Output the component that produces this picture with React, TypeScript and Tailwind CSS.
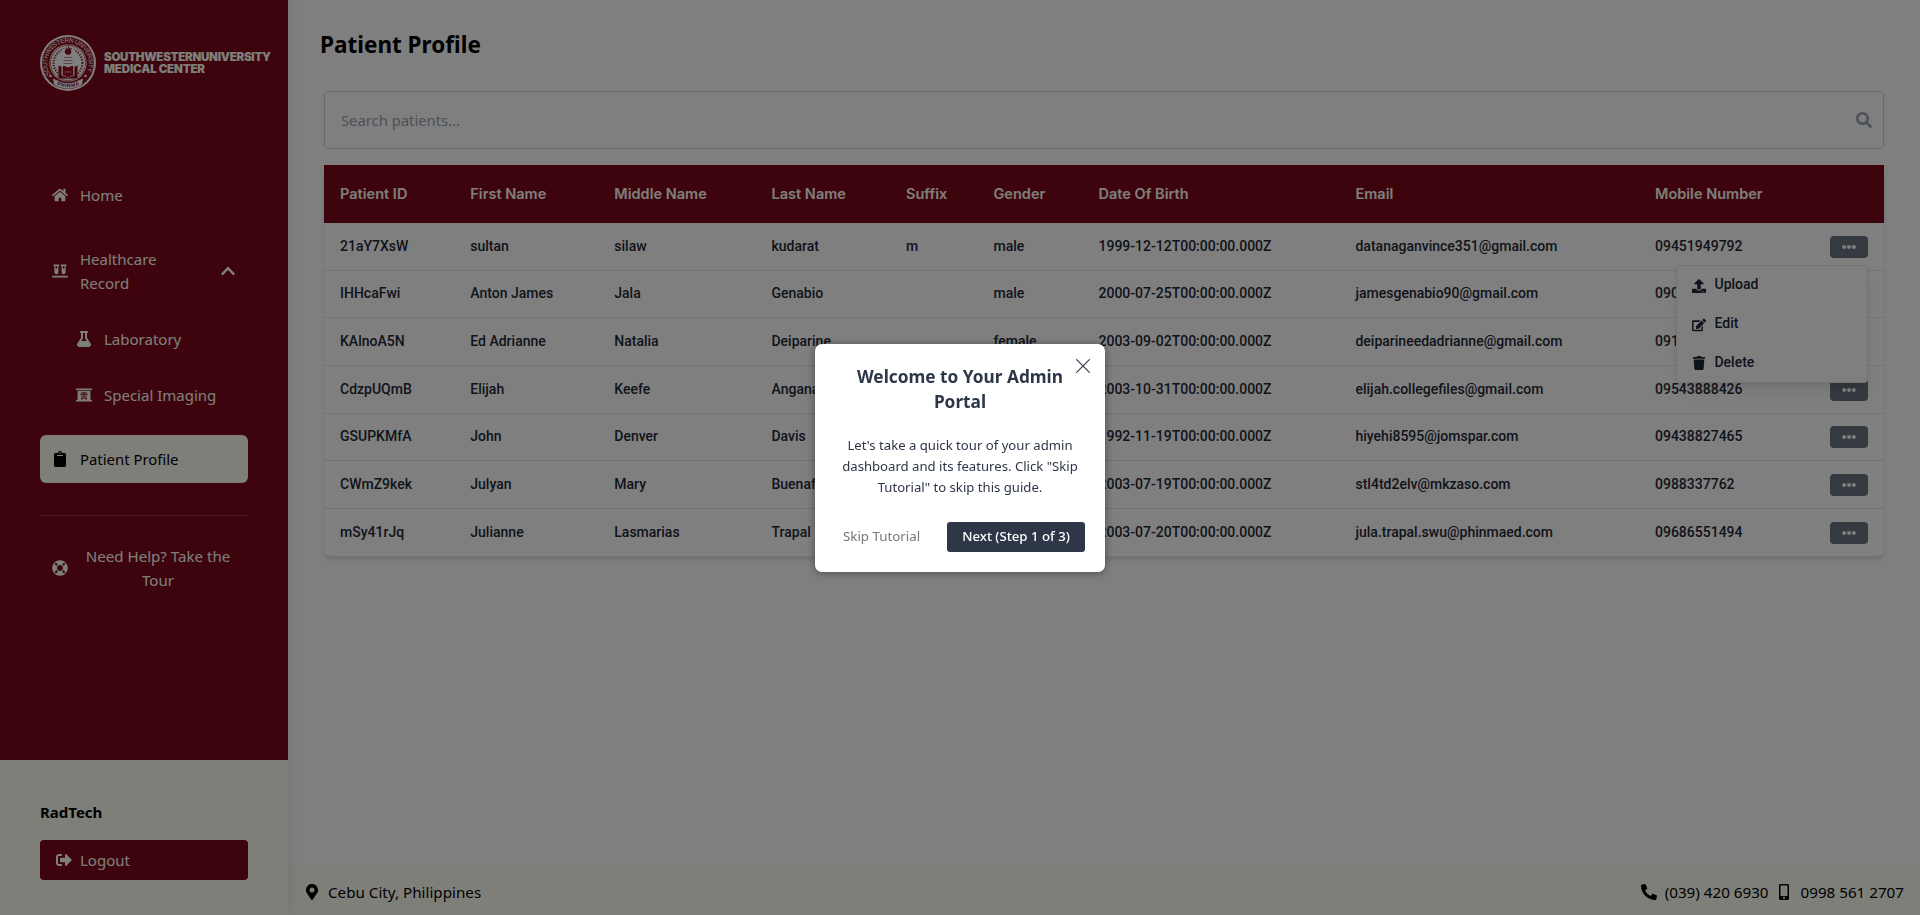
import React from "react";
import {
  FaHome, FaVials, FaFlask, FaXRay, FaClipboard, FaLifeRing, FaSignOutAlt, FaChevronUp,
  FaMapMarkerAlt, FaPhoneAlt, FaMobileAlt, FaUpload, FaEdit, FaTrash, FaSearch, FaEllipsisH,
} from "react-icons/fa";

const COLS = "grid grid-cols-[130.3px_144px_157.2px_134.5px_87.5px_105px_257px_299.5px_175px_70px]";

const headers = ["Patient ID", "First Name", "Middle Name", "Last Name", "Suffix", "Gender", "Date Of Birth", "Email", "Mobile Number"];

const patients = [
  ["21aY7XsW", "sultan", "silaw", "kudarat", "m", "male", "1999-12-12T00:00:00.000Z", "datanaganvince351@gmail.com", "09451949792"],
  ["IHHcaFwi", "Anton James", "Jala", "Genabio", "", "male", "2000-07-25T00:00:00.000Z", "jamesgenabio90@gmail.com", "090"],
  ["KAlnoA5N", "Ed Adrianne", "Natalia", "Deiparine", "", "female", "2003-09-02T00:00:00.000Z", "deiparineedadrianne@gmail.com", "091"],
  ["CdzpUQmB", "Elijah", "Keefe", "Angana", "", "", "2003-10-31T00:00:00.000Z", "elijah.collegefiles@gmail.com", "09543888426"],
  ["GSUPKMfA", "John", "Denver", "Davis", "", "", "1992-11-19T00:00:00.000Z", "hiyehi8595@jomspar.com", "09438827465"],
  ["CWmZ9kek", "Julyan", "Mary", "Buenaf", "", "", "2003-07-19T00:00:00.000Z", "stl4td2elv@mkzaso.com", "0988337762"],
  ["mSy41rJq", "Julianne", "Lasmarias", "Trapal", "", "", "2003-07-20T00:00:00.000Z", "jula.trapal.swu@phinmaed.com", "09686551494"],
];

function Seal() {
  return (
    <svg viewBox="0 0 56 56" className="h-14 w-14 shrink-0">
      <circle cx="28" cy="28" r="28" fill="#fff" />
      <circle cx="28" cy="28" r="26" fill="#8b0f1a" />
      <circle cx="28" cy="28" r="18.6" fill="#fff" />
      <circle cx="28" cy="28" r="17.5" fill="none" stroke="#8b0f1a" strokeWidth=".6" />
      <path id="seal-top" d="M10.5 39.5A20.8 20.8 0 1 1 45.5 39.5" fill="none" />
      <text fontSize="6.5" fill="#fff" fontFamily="Liberation Sans, sans-serif" textLength="85">
        <textPath href="#seal-top">SOUTHWESTERN UNIVERSITY</textPath>
      </text>
      <circle cx="28" cy="28" r="14.4" fill="none" stroke="#8b0f1a" strokeWidth="2" strokeDasharray="1.2 1.4" />
      <path d="M22 14h12l4 17H18z" fill="#fff" />
      <path d="M28 10.500c.6 2.600 3.800 3.500 3.300 6.700-.3 1.800-1.800 2.600-3.300 2.600s-3.300-1-3.300-3c0-1.800 1.200-2 1.500-3.600.8.500 1 1.200 1 1.800.9-1 .9-2.800.8-4.500z" fill="#8b0f1a" />
      <path d="M24 22.500h8M23.500 25.500h9M23.500 28.500h9" stroke="#8b0f1a" strokeWidth=".5" />
      <path d="M18.500 30.500v13h19v-13l-3 1.200v9.500c-2.500 0-4.500.6-6.500 1.800-2-1.200-4-1.800-6.500-1.800v-9.500z" fill="#8b0f1a" />
      <path d="M22.800 31c2 0 3.700.5 5.200 1.600 1.500-1.100 3.200-1.600 5.200-1.600v9.500c-2 0-3.700.5-5.200 1.700-1.500-1.200-3.200-1.700-5.200-1.700z" fill="#8b0f1a" />
      <path d="M24.800 37h6.400" stroke="#fff" strokeWidth="1.500" strokeDasharray="1.200 .5" opacity=".6" />
      <circle cx="10.500" cy="41" r="1.300" fill="#fff" />
      <circle cx="45.500" cy="41" r="1.300" fill="#fff" />
      <path d="M13 43.500l4 1.800c7 4 15 4 22 0l4-1.800-1 6c-8 5.500-20 5.500-28 0z" fill="#fff" />
      <path id="seal-bottom" d="M16 49.500Q28 55 40 49.500" fill="none" />
      <text fontSize="5" fontWeight="700" fill="#8b0f1a" fontFamily="Liberation Sans, sans-serif" letterSpacing=".7">
        <textPath href="#seal-bottom" startOffset="1">PHINMA</textPath>
      </text>
    </svg>
  );
}

function Sidebar() {
  return (
    <aside className="relative flex w-72 shrink-0 flex-col bg-[#fffff4] shadow-[0_0_15px_rgba(0,0,0,0.1)]">
      <div className="flex h-[760px] flex-col bg-[#7a081c] px-10 pt-[35px] text-[#fffff4]">
        <div className="flex items-center gap-2">
          <Seal />
          <div className="whitespace-nowrap font-[Inter,sans-serif] text-[11.5px] font-black leading-3">
            <div className="tracking-[-0.25px]">SOUTHWESTERNUNIVERSITY</div>
            <div className="tracking-[-0.15px]">MEDICAL CENTER</div>
          </div>
        </div>
        <nav className="mt-20 flex flex-col text-[15px] leading-6">
          <a className="flex items-center gap-3 p-3"><FaHome className="h-4 w-4" />Home</a>
          <a className="mt-4 flex items-center gap-3 p-3">
            <FaVials className="h-4 w-4" />
            <span className="w-[100px]">Healthcare Record</span>
            <FaChevronUp className="ml-auto h-4 w-4" />
          </a>
          <a className="ml-6 mt-2 flex items-center gap-3 p-3"><FaFlask className="h-4 w-4" />Laboratory</a>
          <a className="ml-6 mt-2 flex items-center gap-3 p-3"><FaXRay className="h-4 w-4" />Special Imaging</a>
          <a className="mt-4 flex items-center gap-3 rounded-md bg-[#fffff4] p-3 text-[14.9px] text-black"><FaClipboard className="h-4 w-4" />Patient Profile</a>
          <hr className="mt-8 border-white/20" />
          <a className="mt-4 flex items-center gap-3 p-3 text-center text-[15.1px]"><FaLifeRing className="h-4 w-4 shrink-0" /><span className="flex-1">Need Help? Take the Tour</span></a>
        </nav>
      </div>
      <div className="px-10 pt-10">
        <div className="text-[15px] font-bold leading-6">RadTech</div>
        <button className="mt-4 flex h-10 w-full items-center gap-2 rounded bg-[#7a081c] px-4 text-[15px] text-[#fffff4]">
          <FaSignOutAlt className="h-4 w-4" />Logout
        </button>
      </div>
    </aside>
  );
}

function ActionMenu() {
  return (
    <div className="absolute right-0 top-[30px] z-10 h-[118.5px] w-[192px] rounded-[4px] border border-gray-200 bg-white pl-[15.5px] pt-[8px] text-[#1f2937] shadow-lg">
      <div className="flex h-[39px] gap-2"><FaUpload className="mt-[5px] h-3.5 w-3.5" />Upload</div>
      <div className="flex h-[39px] gap-2"><FaEdit className="mt-[5px] h-3.5 w-3.5" />Edit</div>
      <div className="flex h-[39px] gap-2"><FaTrash className="mt-[4px] h-3.5 w-3.5" />Delete</div>
    </div>
  );
}

function PatientTable() {
  return (
    <div className="mt-4 rounded-b-md shadow-md">
      <div className={`${COLS} h-[58px] items-center bg-[#7a081c] font-[Inter,sans-serif] text-[14.5px] font-semibold text-[#fffff4]`}>
        {headers.map((h) => <div key={h} className="whitespace-nowrap pb-px pl-4 tracking-[0.02px]">{h}</div>)}
      </div>
      {patients.map((p, i) => (
        <div key={p[0]} className={`${COLS} h-[47.667px] items-center border-b border-gray-200 font-[Roboto,sans-serif] text-sm font-medium text-[#1f2937] last:rounded-b-md`}>
          {p.map((v, j) => <div key={j} className="whitespace-nowrap pb-[1.5px] pl-4">{v}</div>)}
          <div className="relative mr-4 flex justify-end pt-px">
            <div className="flex h-[22px] w-[38px] items-center justify-center rounded bg-[#6b7280] text-white"><FaEllipsisH className="h-3.5 w-3.5" /></div>
            {i === 0 && <ActionMenu />}
          </div>
        </div>
      ))}
    </div>
  );
}

function TourDialog() {
  return (
    <div className="fixed inset-0 z-50 flex items-center justify-center bg-black/50">
      <div className="relative h-[228px] w-[290px] rounded-[7px] bg-white px-5 pt-5 text-center text-[#2d3748] shadow-[0_1px_10px_rgba(0,0,0,0.4)]">
        <svg viewBox="0 0 14 14" className="absolute right-[15px] top-[15px] h-3.5 w-3.5" stroke="#2d3748" strokeWidth="1.1"><path d="M.3.3l13.400 13.400M13.700.3L.3 13.700" /></svg>
        <h2 className="px-2 text-[17.25px] font-bold leading-[25px]">Welcome to Your Admin Portal</h2>
        <p className="mt-[21px] text-[13.15px] leading-[21px]">Let's take a quick tour of your admin dashboard and its features. Click "Skip Tutorial" to skip this guide.</p>
        <div className="mt-[24.5px] flex items-center justify-between">
          <button className="pl-2 text-[13.3px] text-[#777]">Skip Tutorial</button>
          <button className="h-[30px] w-[138px] whitespace-nowrap rounded-[3px] bg-[#2d3748] text-[13.2px] font-medium text-white">Next (Step 1 of 3)</button>
        </div>
      </div>
    </div>
  );
}

export default function App() {
  return (
    <div className="flex h-[915px] w-full overflow-hidden bg-white font-['Noto_Sans',sans-serif] text-black">
      <Sidebar />
      <main className="flex flex-1 flex-col">
        <div className="flex-1 pl-9 pr-9">
          <h1 className="-ml-1 mt-[29px] text-[22.5px] font-bold leading-8">Patient Profile</h1>
          <div className="mt-[30px] flex h-[58px] items-center justify-between rounded border border-gray-300 pl-4 pr-[11px] text-[14.8px] text-gray-400">
            Search patients...
            <FaSearch className="h-4 w-4" />
          </div>
          <PatientTable />
        </div>
        <footer className="flex h-[50px] items-center bg-[#fffff4] pl-4 pr-4 pt-1 text-[15.2px]">
          <FaMapMarkerAlt className="h-4 w-4" />
          <span className="ml-2">Cebu City, Philippines</span>
          <FaPhoneAlt className="ml-auto h-4 w-4" />
          <span className="ml-2">(039) 420 6930</span>
          <FaMobileAlt className="ml-[7px] h-4 w-4" />
          <span className="ml-[9px]">0998 561 2707</span>
        </footer>
      </main>
      <TourDialog />
    </div>
  );
}
